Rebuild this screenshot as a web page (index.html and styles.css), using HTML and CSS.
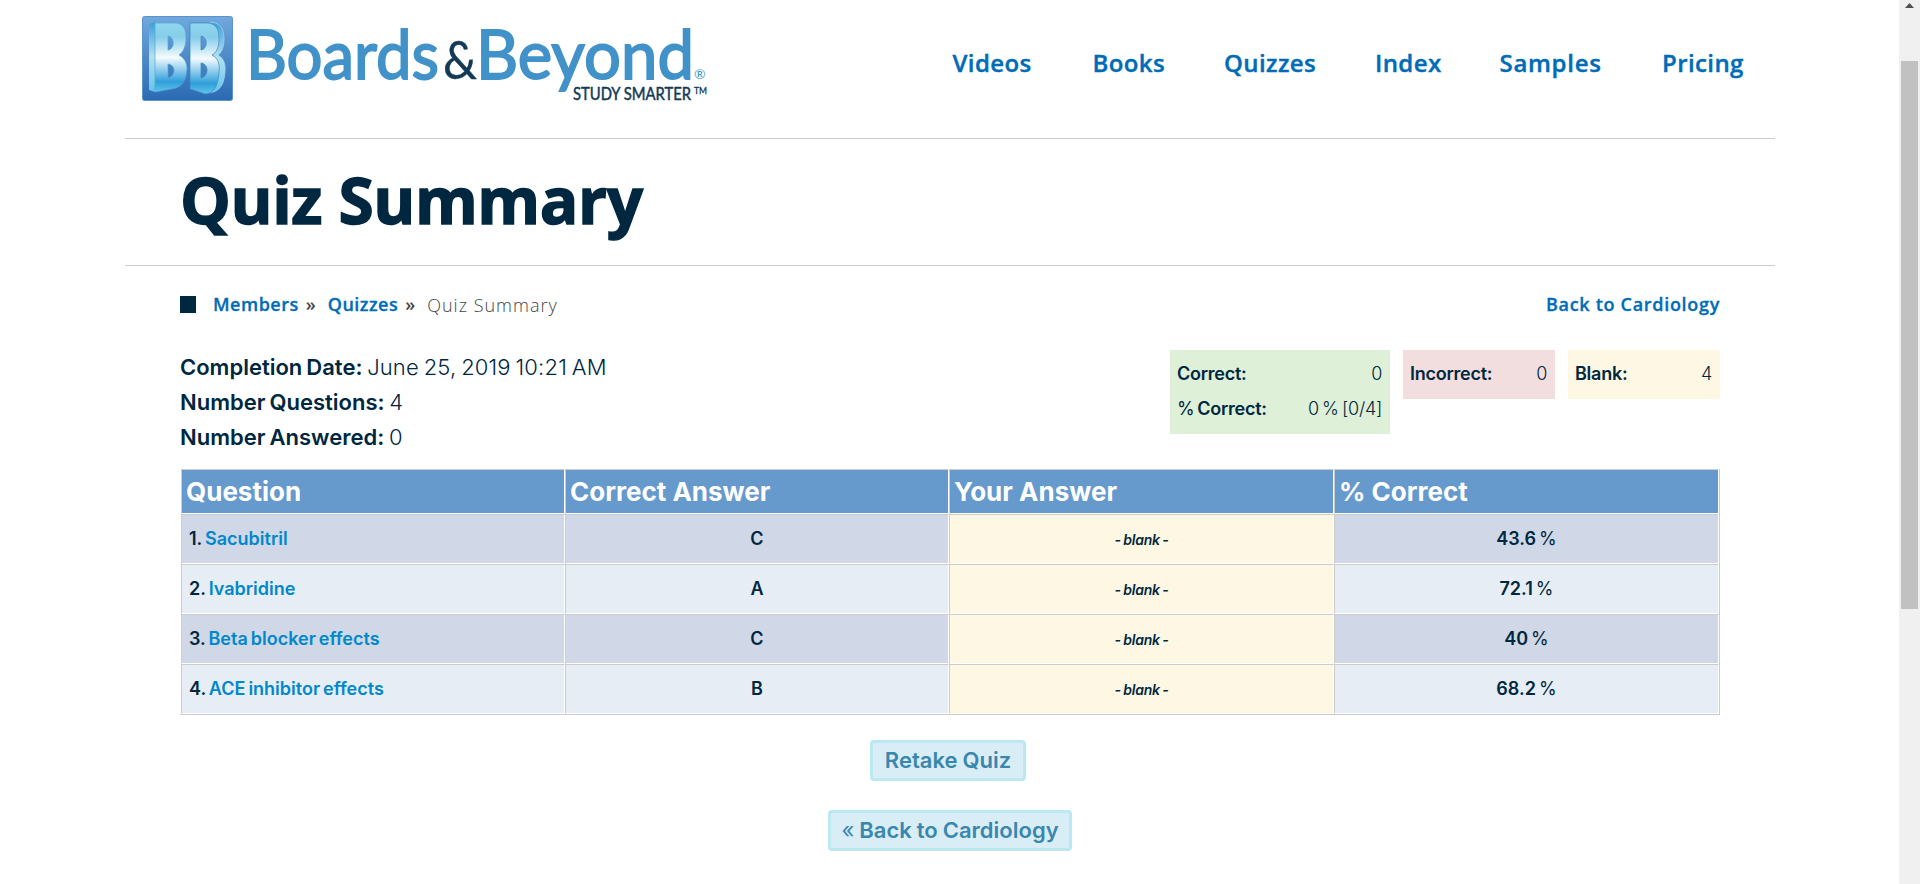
FILE: index.html
```html
<!DOCTYPE html>
<html lang="en">
<head>
<meta charset="utf-8">
<title>Quiz Summary - Boards &amp; Beyond</title>
<link rel="stylesheet" href="styles.css">
</head>
<body>
<div class="page">
  <header class="site-header">
    <svg class="logo" width="570" height="96" viewBox="0 0 570 96" role="img" aria-label="Boards and Beyond">
      <defs>
        <linearGradient id="tile" x1="0" y1="0" x2="0" y2="1">
          <stop offset="0" stop-color="#71a9dc"/><stop offset="1" stop-color="#2b69b2"/>
        </linearGradient>
        <linearGradient id="face" x1="0" y1="0" x2="0" y2="1">
          <stop offset="0" stop-color="#8fd6ee"/><stop offset=".2" stop-color="#86cdea"/><stop offset=".5" stop-color="#f4fbfe"/><stop offset=".85" stop-color="#2f9fdb"/><stop offset="1" stop-color="#62c3ea"/>
        </linearGradient>
        <linearGradient id="side" x1="0" y1="0" x2="0" y2="1">
          <stop offset="0" stop-color="#3b9fd8"/><stop offset=".5" stop-color="#b5e0f3"/><stop offset="1" stop-color="#5fc4ea"/>
        </linearGradient>
      </defs>
      <rect x="1.5" y="4.500" width="90" height="84" rx="2" fill="url(#tile)" stroke="#5b93d0"/>
      <path d="M8 12L14 10V80L8 78Z" fill="url(#side)"/>
      <path fill-rule="evenodd" d="M14 11H34C43 11 45 18 45 26C45 35 42 40 38 43C43 46 46 50 46 57C45 70 40 76 30 77L14 80ZM27 24V38C34 37 34 25 27 24ZM27 52V66C35 64 35 53 27 52Z" fill="url(#face)" stroke="#4fa9da" stroke-width=".7"/>
      <path d="M70 10C80 11 83 18 83 27C83 36 80 41 77 43C82 46 85 51 84 60C83 74 78 80 67 81Z" fill="url(#side)" stroke="#9bd5ef" stroke-width=".8"/>
      <path fill-rule="evenodd" d="M49 11H67C76 12 78 18 78 27C78 36 75 41 71 43C77 46 79 52 78 60C77 75 72 82 64 82L49 77ZM60 24V38C67 37 67 25 60 24ZM60 51V66C68 64 68 52 60 51Z" fill="url(#face)" stroke="#3587c2" stroke-width=".7"/>
      <g class="logo-word">
        <text x="105" y="66.500" textLength="193" lengthAdjust="spacingAndGlyphs">Boards</text>
        <text x="335" y="66.500" textLength="218" lengthAdjust="spacingAndGlyphs">Beyond</text>
      </g>
      <text class="logo-amp" x="302" y="67" textLength="34" lengthAdjust="spacingAndGlyphs">&amp;</text>
      <text class="logo-reg" x="553" y="67">®</text>
      <text class="logo-tag" x="432" y="88" textLength="118" lengthAdjust="spacingAndGlyphs">STUDY SMARTER</text>
      <text class="logo-tm" x="553" y="82" textLength="13" lengthAdjust="spacingAndGlyphs">TM</text>
    </svg>
    <nav class="main-nav">
      <a>Videos</a><a>Books</a><a>Quizzes</a><a>Index</a><a class="wide">Samples</a><a>Pricing</a>
    </nav>
  </header>
  <div class="title-bar"><h1>Quiz Summary</h1></div>
  <main class="content">
    <div class="crumb-row">
      <div class="crumbs">
        <span class="crumb-mark"></span>
        <a>Members</a><b class="sep">»</b><a>Quizzes</a><b class="sep">»</b><span class="current">Quiz Summary</span>
      </div>
      <a class="back-link">Back to Cardiology</a>
    </div>
    <div class="overview">
      <div class="facts">
        <p><b>Completion Date:</b> <span class="date">June 25, 2019 10:21 AM</span></p>
        <p><b>Number Questions:</b> 4</p>
        <p><b>Number Answered:</b> 0</p>
      </div>
      <div class="scores">
        <div class="score correct">
          <div><b>Correct:</b><span>0</span></div>
          <div><b><i>%</i> Correct:</b><span>0 % [0/4]</span></div>
        </div>
        <div class="score incorrect"><div><b>Incorrect:</b><span>0</span></div></div>
        <div class="score blank"><div><b>Blank:</b><span>4</span></div></div>
      </div>
    </div>
    <div class="results">
      <div class="cell head">Question</div><div class="cell head">Correct Answer</div><div class="cell head">Your Answer</div><div class="cell head">% Correct</div>
      <div class="cell name odd"><span>1. <a>Sacubitril</a></span></div><div class="cell odd">C</div><div class="cell none"><i>- blank -</i></div><div class="cell odd"><span>43.6 <small>%</small></span></div>
      <div class="cell name even"><span>2. <a>Ivabridine</a></span></div><div class="cell even">A</div><div class="cell none"><i>- blank -</i></div><div class="cell even"><span>72.1 <small>%</small></span></div>
      <div class="cell name odd"><span>3. <a>Beta blocker effects</a></span></div><div class="cell odd">C</div><div class="cell none"><i>- blank -</i></div><div class="cell odd"><span>40 <small>%</small></span></div>
      <div class="cell name even"><span>4. <a>ACE inhibitor effects</a></span></div><div class="cell even">B</div><div class="cell none"><i>- blank -</i></div><div class="cell even"><span>68.2 <small>%</small></span></div>
    </div>
    <div class="actions">
      <a class="button retake">Retake Quiz</a>
      <a class="button"><i>«</i> Back to Cardiology</a>
    </div>
  </main>
</div>
<div class="scrollbar">
  <svg width="21" height="61" viewBox="0 0 21 61"><path d="M6 8L10.500 3L15 8Z" fill="#505050"/></svg>
  <div class="thumb"></div>
</div>
</body>
</html>
```

FILE: styles.css
```css
* { box-sizing: border-box; }
body {
  margin: 0;
  display: flex;
  height: 884px;
  overflow: hidden;
  background: #fff;
  color: #002740;
  font-family: Inter, "Liberation Sans", sans-serif;
}
.page { flex: 1; padding: 0 124px 0 125px; }
a { color: #006cb8; text-decoration: none; }

.site-header {
  display: flex;
  justify-content: space-between;
  height: 139px;
  padding: 12px 31px 0 16px;
  border-bottom: 1px solid #ccc;
}
.logo { font-family: Lato, sans-serif; }
.logo-word { fill: #4192c8; stroke: #4192c8; stroke-width: 1.8px; font-size: 67px; }
.logo-amp { fill: #123a56; stroke: #123a56; stroke-width: .4px; font-size: 53px; }
.logo-reg { fill: #4192c8; font-size: 14px; }
.logo-tag { fill: #123a56; stroke: #123a56; stroke-width: .5px; font-size: 17px; }
.logo-tm { fill: #123a56; stroke: #123a56; stroke-width: .3px; font-size: 9px; }
.main-nav {
  display: grid;
  grid-template-columns: 140px 131.5px 151px 124.5px 162.5px 82px;
  padding-top: 34px;
  font: 600 24px/34px "Open Sans", sans-serif;
  letter-spacing: .4px;
  -webkit-text-stroke: .4px;
}
.main-nav .wide { letter-spacing: .7px; }

.title-bar {
  height: 127px;
  padding-left: 55px;
  border-bottom: 1px solid #ccc;
}
h1 {
  display: inline-block;
  margin: 0;
  font: 700 64px/121px "Open Sans", sans-serif;
  letter-spacing: -.4px;
  -webkit-text-stroke: 1.4px;
}

.content { padding: 0 55px; }
.crumb-row {
  display: flex;
  justify-content: space-between;
  height: 52px;
  padding-top: 25px;
  font: 600 18px/26px "Open Sans", sans-serif;
  letter-spacing: .5px;
}
.crumb-row a { -webkit-text-stroke: .3px; }
.crumb-row .back-link { letter-spacing: .7px; }
.crumbs { display: flex; }
.crumb-mark {
  width: 16px;
  height: 17px;
  margin: 5px 17px 0 0;
  background: #002740;
}
.sep { width: 29px; padding-left: 7px; color: #444; font-weight: 600; }
.current { padding-top: 1px; color: #444; font-weight: 300; letter-spacing: 1px; }

.overview { display: flex; justify-content: space-between; padding-top: 32px; }
.facts {
  height: 119px;
  font-size: 22px;
  line-height: 34.800px;
  font-weight: 300;
  letter-spacing: 0;
  word-spacing: -1.5px;
}
.facts p { margin: 0; }
.facts .date { letter-spacing: .15px; }
.facts b, .score b { font-weight: 600; }
.scores {
  display: flex;
  align-items: flex-start;
  gap: 13px;
  font-size: 18px;
  line-height: 35px;
  font-weight: 300;
  letter-spacing: -.25px;
  word-spacing: -1.5px;
}
.score { width: 152px; padding: 6px 8px 8px 7px; }
.score div { display: flex; justify-content: space-between; }
.correct { width: 220px; background: #dff0d8; }
.incorrect { background: #f2dede; }
.blank { background: #fdf7e3; }
i { font-style: normal; }
.score b i { font-weight: 400; }

.results {
  display: grid;
  grid-template-columns: 384px 384px 385px 385px;
  grid-template-rows: 45px repeat(4, 50px);
  width: 1540px;
  padding-left: 1px;
  border-right: 1px solid #ccc;
  border-bottom: 1px solid #ccc;
}
.cell {
  display: flex;
  align-items: center;
  justify-content: center;
  padding-bottom: 2px;
  border: 1px solid #fff;
  border-top-color: #ccc;
  border-left-color: #ccc;
  font-size: 18px;
  font-weight: 600;
  word-spacing: -1.5px;
}
.head {
  justify-content: flex-start;
  padding: 0 0 0 4px;
  background: #6699cc;
  color: #fff;
  font-size: 26px;
  font-weight: 700;
  word-spacing: 0;
}
.name { justify-content: flex-start; padding-left: 7px; letter-spacing: 0; }
.name a { color: #08c; }
.odd { background: #d0d7e6; }
.even { background: #e7edf5; }
.none { padding: 0; background: #fdf7e3; font-size: 14px; letter-spacing: -.2px; word-spacing: -1px; }
.none i { font-style: italic; }
small { font-size: inherit; font-weight: 400; }

.actions {
  display: flex;
  flex-direction: column;
  align-items: center;
  gap: 29px;
  padding-top: 25px;
}
.button {
  height: 41px;
  padding: 0 10px;
  border: 3px solid #bce8f1;
  border-radius: 4px;
  background: #d9edf7;
  color: #3a87ad;
  font-size: 22px;
  font-weight: 600;
  line-height: 35px;
  word-spacing: -.5px;
}
.button i { font-weight: 400; }
.retake { padding: 0 11.5px; margin-right: 4px; }

.scrollbar { width: 21px; background: #f0f0f0; }
.scrollbar svg { display: block; }
.thumb { width: 17px; height: 548px; margin-left: 2px; background: #c1c1c1; }
```
